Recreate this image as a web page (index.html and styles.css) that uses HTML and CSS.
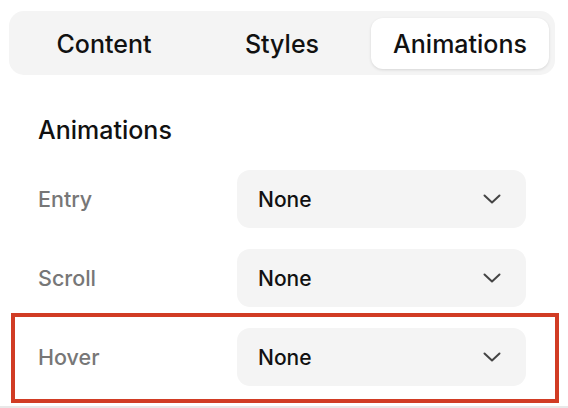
FILE: index.html
```html
<!DOCTYPE html>
<html>
<head>
<meta charset="utf-8">
<link rel="stylesheet" href="styles.css">
</head>
<body>
<div class="panel">
  <div class="tabs">
    <div class="tab">Content</div>
    <div class="tab">Styles</div>
    <div class="tab active">Animations</div>
  </div>
  <h2 class="heading">Animations</h2>
  <div class="rows">
    <div class="row">
      <div class="label">Entry</div>
      <div class="select"><span>None</span>
        <svg class="chev" width="18" height="10" viewBox="0 0 18 10"><path d="M1.5 1.5 L9 8.5 L16.5 1.5" fill="none" stroke="#444" stroke-width="2" stroke-linecap="round" stroke-linejoin="round"/></svg>
      </div>
    </div>
    <div class="row">
      <div class="label">Scroll</div>
      <div class="select"><span>None</span>
        <svg class="chev" width="18" height="10" viewBox="0 0 18 10"><path d="M1.5 1.5 L9 8.5 L16.5 1.5" fill="none" stroke="#444" stroke-width="2" stroke-linecap="round" stroke-linejoin="round"/></svg>
      </div>
    </div>
    <div class="row">
      <div class="label">Hover</div>
      <div class="select"><span>None</span>
        <svg class="chev" width="18" height="10" viewBox="0 0 18 10"><path d="M1.5 1.5 L9 8.5 L16.5 1.5" fill="none" stroke="#444" stroke-width="2" stroke-linecap="round" stroke-linejoin="round"/></svg>
      </div>
    </div>
  </div>
  <div class="bottom-line"></div>
  <div class="highlight"></div>
</div>
</body>
</html>
```
FILE: styles.css
```css
html, body {
  margin: 0;
  padding: 0;
  background: #ffffff;
}
body {
  font-family: Inter, "Noto Sans", sans-serif;
  color: #111111;
  width: 568px;
  height: 408px;
  overflow: hidden;
}
.panel {
  position: relative;
  height: 408px;
  padding-top: 11px;
  box-sizing: border-box;
}
.tabs {
  margin-left: 9px;
  width: 546px;
  height: 64px;
  box-sizing: border-box;
  padding: 7px 6px 6px;
  background: #f4f4f4;
  border-radius: 15px;
  display: grid;
  grid-template-columns: repeat(3, 1fr);
}
.tab {
  display: flex;
  align-items: center;
  justify-content: center;
  font-size: 25px;
  font-weight: 500;
  color: #111;
  border-radius: 12px;
}
.tab.active {
  background: #ffffff;
  box-shadow: 0 1px 3px rgba(0,0,0,0.12);
}
.heading {
  margin: 0;
  margin-left: 38px;
  margin-top: 40px;
  font-size: 25px;
  font-weight: 500;
  line-height: 30px;
  color: #111;
}
.rows {
  margin-top: 25px;
  display: flex;
  flex-direction: column;
  gap: 21px;
}
.row {
  display: flex;
  align-items: center;
  padding-left: 38px;
}
.label {
  width: 199px;
  font-size: 21.5px;
  font-weight: 500;
  color: #777777;
}
.select {
  width: 289px;
  height: 58px;
  box-sizing: border-box;
  background: #f4f4f4;
  border-radius: 13px;
  display: flex;
  align-items: center;
  justify-content: space-between;
  padding: 0 25px 0 21px;
  font-size: 21px;
  font-weight: 500;
  color: #111;
}
.chev {
  display: block;
}
.bottom-line {
  position: absolute;
  left: 0;
  right: 0;
  top: 406px;
  height: 2px;
  background: #e8e8e8;
}
.highlight {
  position: absolute;
  left: 11px;
  top: 313px;
  width: 548px;
  height: 90px;
  box-sizing: border-box;
  border: 4px solid #d13c24;
}
```
